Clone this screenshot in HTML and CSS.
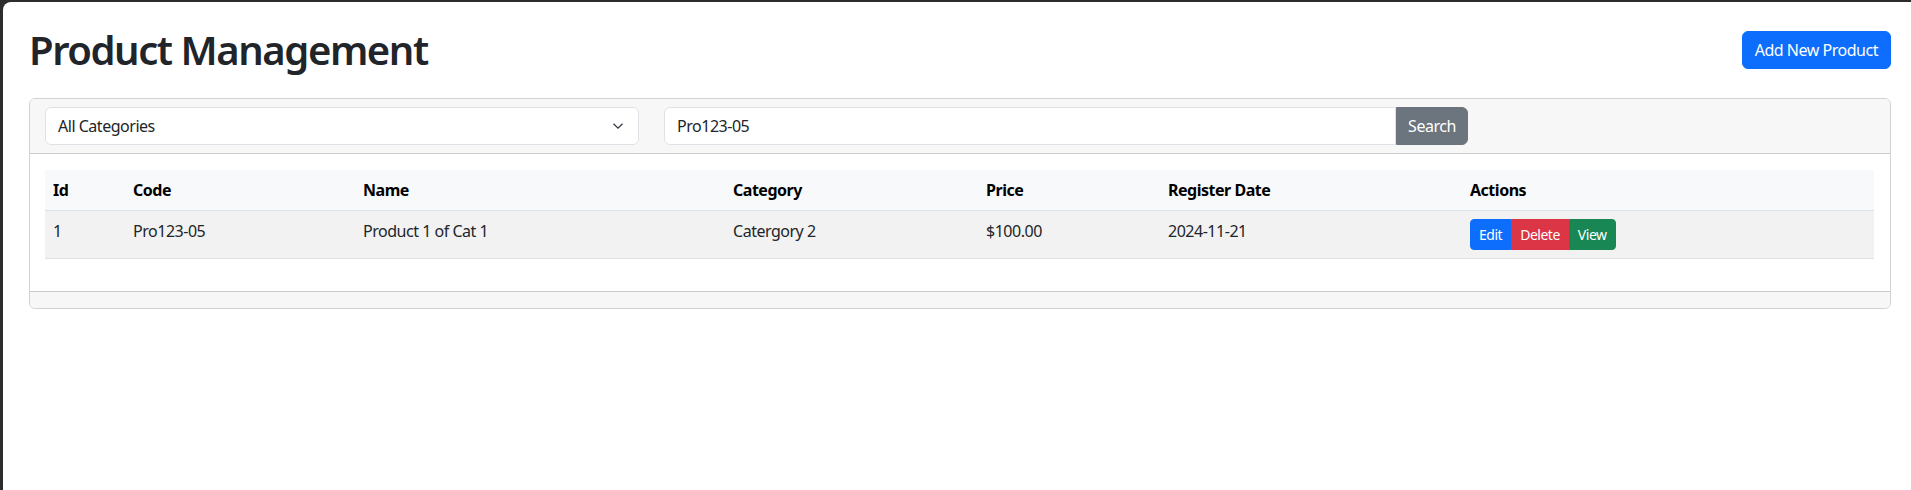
FILE: index.html
```html
<!DOCTYPE html>
<html lang="en">
<head>
<meta charset="utf-8">
<title>Product Management</title>
<link rel="stylesheet" href="styles.css">
</head>
<body>
<div class="window">
  <div class="page">
    <header class="page-header">
      <h1 class="page-title">Product Management</h1>
      <button class="btn btn-primary">Add New Product</button>
    </header>

    <section class="card">
      <div class="card-header">
        <div class="select-wrap">
          <select class="form-select">
            <option>All Categories</option>
          </select>
          <svg class="chevron" width="12" height="8" viewBox="0 0 12 8" aria-hidden="true">
            <path d="M1.5 1.8 6 6.2l4.5-4.4" fill="none" stroke="#343a40" stroke-width="1.3"/>
          </svg>
        </div>
        <div class="input-group">
          <input class="form-control" type="text" value="Pro123-05">
          <button class="btn btn-secondary">Search</button>
        </div>
      </div>

      <div class="card-body">
        <table class="table">
          <colgroup>
            <col class="c-id"><col class="c-code"><col class="c-name"><col class="c-cat"><col class="c-price"><col class="c-date"><col class="c-actions">
          </colgroup>
          <thead>
            <tr>
              <th>Id</th><th>Code</th><th>Name</th><th>Category</th><th>Price</th><th>Register Date</th><th>Actions</th>
            </tr>
          </thead>
          <tbody>
            <tr>
              <td>1</td>
              <td>Pro123-05</td>
              <td>Product 1 of Cat 1</td>
              <td>Catergory 2</td>
              <td>$100.00</td>
              <td>2024-11-21</td>
              <td>
                <div class="btn-group">
                  <button class="btn btn-sm btn-primary">Edit</button>
                  <button class="btn btn-sm btn-danger">Delete</button>
                  <button class="btn btn-sm btn-success">View</button>
                </div>
              </td>
            </tr>
          </tbody>
        </table>
      </div>

      <div class="card-footer"></div>
    </section>
  </div>
</div>
</body>
</html>
```

FILE: styles.css
```css
* { box-sizing: border-box; }

html, body {
  margin: 0;
  height: 100%;
}

body {
  background: #2d2d2d;
  font-family: "Noto Sans", "Open Sans", sans-serif;
  color: #212529;
  font-size: 16px;
  line-height: 1.5;
  letter-spacing: -0.03em;
}

.window {
  height: 100%;
  padding: 2px 0 0 3px;
}

.page {
  background: #fff;
  height: 100%;
  border-top-left-radius: 8px;
  padding: 24px 20px 0 26px;
}

.page-header {
  display: flex;
  justify-content: space-between;
  align-items: center;
  margin-bottom: 24px;
}

.page-title {
  margin: 0;
  font-size: 40px;
  font-weight: 600;
  line-height: 1.2;
  color: #212529;
  letter-spacing: -0.036em;
}

.btn {
  font-family: inherit;
  font-size: 16px;
  line-height: 1.5;
  letter-spacing: inherit;
  padding: 6px 12px;
  border: 1px solid transparent;
  border-radius: 6px;
  color: #fff;
  cursor: pointer;
}

.btn-primary { background: #0d6efd; border-color: #0d6efd; }
.btn-secondary { background: #6c757d; border-color: #6c757d; }
.btn-danger { background: #dc3545; border-color: #dc3545; }
.btn-success { background: #198754; border-color: #198754; }

.btn-sm {
  font-size: 14px;
  padding: 4px 8px;
  border-radius: 4px;
}

.card {
  border: 1px solid rgba(0, 0, 0, 0.175);
  border-radius: 6px;
  overflow: hidden;
}

.card-header {
  background: #f7f7f7;
  border-bottom: 1px solid rgba(0, 0, 0, 0.175);
  padding: 8px 16px 8px 15px;
  display: flex;
  gap: 25px;
}

.select-wrap {
  position: relative;
  width: 594px;
  flex: none;
}

.form-select,
.form-control {
  display: block;
  width: 100%;
  height: 38px;
  font-family: inherit;
  font-size: 16px;
  line-height: 1.5;
  letter-spacing: inherit;
  color: #212529;
  background: #fff;
  border: 1px solid #dee2e6;
  border-radius: 6px;
  padding: 6px 12px;
  outline: none;
}

.form-select {
  appearance: none;
  -webkit-appearance: none;
  padding-right: 36px;
}

.chevron {
  position: absolute;
  right: 15px;
  top: 15px;
  pointer-events: none;
}

.input-group {
  display: flex;
  width: 804px;
  flex: none;
}

.input-group .form-control {
  flex: 1;
  border-top-right-radius: 0;
  border-bottom-right-radius: 0;
}

.input-group .btn {
  width: 72px;
  padding: 6px 0;
  border-top-left-radius: 0;
  border-bottom-left-radius: 0;
}

.card-body {
  padding: 16px 16px 16px 15px;
}

.table {
  width: 100%;
  border-collapse: collapse;
  table-layout: fixed;
  margin-bottom: 16px;
}

.c-id { width: 80px; }
.c-code { width: 230px; }
.c-name { width: 370px; }
.c-cat { width: 253px; }
.c-price { width: 182px; }
.c-date { width: 302px; }
.c-actions { width: auto; }

.table th,
.table td {
  text-align: left;
  padding: 8px;
  border-bottom: 1px solid #dee2e6;
  vertical-align: top;
}

.table th {
  background: #f8f9fa;
  color: #000;
  font-weight: 700;
}

.table td {
  background: #f2f2f2;
  color: #212529;
}

.btn-group {
  display: inline-flex;
}

.btn-group .btn {
  border-radius: 0;
}

.btn-group .btn:first-child {
  border-top-left-radius: 4px;
  border-bottom-left-radius: 4px;
}

.btn-group .btn:last-child {
  border-top-right-radius: 4px;
  border-bottom-right-radius: 4px;
}

.card-footer {
  background: #f7f7f7;
  border-top: 1px solid rgba(0, 0, 0, 0.175);
  padding: 8px 16px;
}
```
